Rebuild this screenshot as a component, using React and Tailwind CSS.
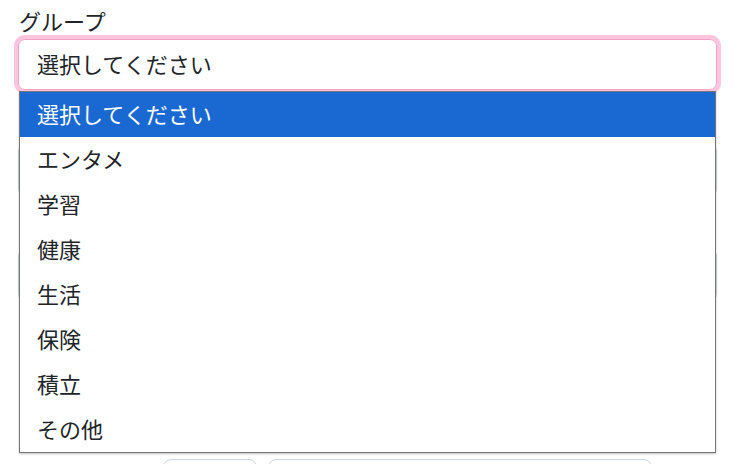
import React from 'react';

const options = ['選択してください', 'エンタメ', '学習', '健康', '生活', '保険', '積立', 'その他'];

export default function App() {
  return (
    <div className="h-screen bg-white text-[#212529] overflow-hidden" style={{ fontFamily: '"Noto Sans CJK JP", "Noto Sans", sans-serif' }}>
      <div className="pl-[18px] pr-[30px] pt-[5px]">
        <div className="text-[22px] leading-[30px] pl-[1px]">グループ</div>

        {/* focused select with dropdown open */}
        <div className="relative mt-[4px]">
          <div className="h-[51px] rounded-[7px] border border-[#f2a0c3] shadow-[0_0_0_4px_#ffc4de] flex items-center pl-[18px] pb-[2px] text-[22px]">
            選択してください
          </div>
          <ul className="absolute left-[1px] right-[1px] top-[52px] z-10 bg-white border border-[#767676] shadow-[0_1px_2px_rgba(0,0,0,0.25)]">
            {options.map((o, i) => (
              <li
                key={o}
                className={`h-[45px] flex items-center pl-[17px] pb-[3px] text-[22px] ${i === 0 ? 'bg-[#1a69d3] text-white' : ''}`}
              >
                {o}
              </li>
            ))}
          </ul>
        </div>

        {/* fields hidden under the list */}
        <div className="mt-[54px] h-[52px] rounded-[7px] border border-[#ced4da]" />
        <div className="mt-[53px] h-[52px] rounded-[7px] border border-[#ced4da]" />

        <div className="flex gap-[11px] pl-[145px] mt-[158px]">
          <div className="w-[94px] h-[40px] rounded-[8px] border border-[#cfd6de]" />
          <div className="w-[384px] h-[40px] rounded-[8px] border border-[#cfd6de]" />
        </div>
      </div>
    </div>
  );
}
